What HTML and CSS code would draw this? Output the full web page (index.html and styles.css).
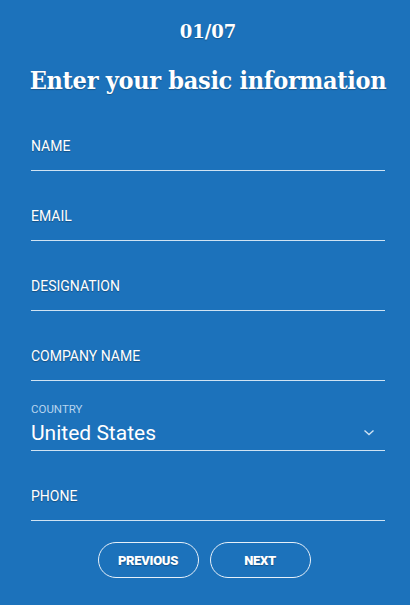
FILE: index.html
```html
<!DOCTYPE html>
<html>
<head>
    <title>Basic information</title>
    <link rel="stylesheet" href="styles.css">
</head>
<body>
<div class="wizard">
    <div class="step">01/07</div>
    <h1 class="title">Enter your basic information</h1>
    <form class="form">
        <div class="field"><span class="label">NAME</span></div>
        <div class="field"><span class="label">EMAIL</span></div>
        <div class="field"><span class="label">DESIGNATION</span></div>
        <div class="field"><span class="label">COMPANY NAME</span></div>
        <div class="field select">
            <span class="small">COUNTRY</span>
            <div class="value">
                <span>United States</span>
                <svg class="chev" width="12" height="8" viewBox="0 0 12 8"><path d="M1.5 1.5 L6 5.5 L10.5 1.5" fill="none" stroke="#cfe3f3" stroke-width="1.4"/></svg>
            </div>
        </div>
        <div class="field"><span class="label">PHONE</span></div>
    </form>
    <div class="actions">
        <button type="button" class="btn">PREVIOUS</button>
        <button type="button" class="btn">NEXT</button>
    </div>
</div>
</body>
</html>
```

FILE: styles.css
```css
html, body {
    margin: 0;
    padding: 0;
}
body {
    background: #1c72bb;
    color: #fff;
    width: 410px;
    height: 605px;
    overflow: hidden;
}
.wizard {
    padding-top: 21px;
}
.step {
    text-align: center;
    font: bold 18px "DejaVu Serif", serif;
    height: 22px;
    line-height: 22px;
    padding-left: 6px;
    text-shadow: 0 1px 1px rgba(0,0,0,.25);
}
.title {
    margin: 23px 0 0 0;
    text-align: center;
    font: bold 25px "DejaVu Serif Condensed", "DejaVu Serif", serif;
    letter-spacing: -0.3px;
    line-height: 30px;
    padding-left: 6px;
    text-shadow: 0 1px 1px rgba(0,0,0,.25);
}
.form {
    margin: 0 25px 0 31px;
}
.field {
    border-bottom: 1px solid #cfe3f3;
    display: flex;
    flex-direction: column;
    justify-content: flex-end;
    padding-bottom: 16px;
    box-sizing: border-box;
    height: 70px;
}
.form .field:first-child {
    height: 75px;
}
.label {
    font: 14px Roboto, "Liberation Sans", sans-serif;
    line-height: 15px;
    text-shadow: 0 1px 1px rgba(0,0,0,.3);
}
.select {
    padding-bottom: 4px;
}
.small {
    font: 11.5px Roboto, "Liberation Sans", sans-serif;
    color: #b6d4ee;
    line-height: 13px;
    margin-bottom: 4px;
}
.value {
    display: flex;
    align-items: center;
    justify-content: space-between;
    font: 21px Roboto, "Liberation Sans", sans-serif;
    line-height: 26px;
    padding-right: 10px;
}
.chev {
    display: block;
}
.actions {
    display: flex;
    justify-content: center;
    gap: 11px;
    margin-top: 21px;
    padding-right: 2px;
}
.btn {
    width: 101px;
    height: 36px;
    border: 1px solid #e6f0f9;
    border-radius: 18px;
    background: transparent;
    color: #fff;
    font: 900 13px Roboto, "Liberation Sans", sans-serif;
    letter-spacing: -0.3px;
    padding: 0;
    text-shadow: 0 1px 1px rgba(0,0,0,.3);
}
```
